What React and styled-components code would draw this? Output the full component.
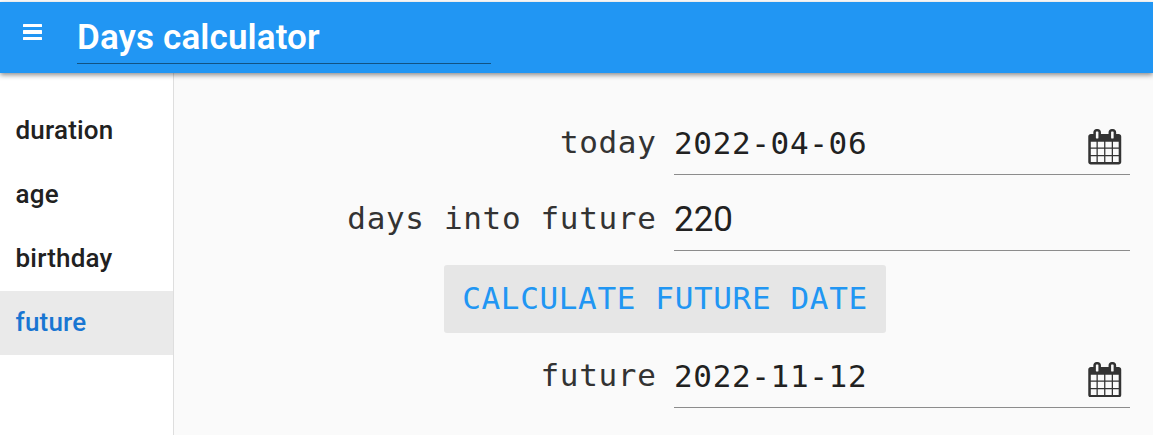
import React from "react";
import styled, { createGlobalStyle } from "styled-components";

const GlobalStyle = createGlobalStyle`
  *, *::before, *::after { box-sizing: border-box; }
  body { margin: 0; background: #fff; font-family: Roboto, sans-serif; overflow: hidden; }
`;

const Page = styled.div`
  display: flex;
  flex-direction: column;
  height: 435px;
  padding-top: 2px;
`;

const AppBar = styled.header`
  position: relative;
  z-index: 1;
  flex: none;
  display: flex;
  align-items: flex-start;
  height: 71px;
  padding-left: 23px;
  background: #2196f3;
  box-shadow: 0 2px 5px rgba(0, 0, 0, 0.45);
`;

const MenuButton = styled.button`
  display: flex;
  flex-direction: column;
  gap: 3px;
  width: 19px;
  margin: 22px 35px 0 0;
  padding: 0;
  border: 0;
  background: none;
`;

const MenuBar = styled.span`
  height: 3.4px;
  border-radius: 0.5px;
  background: #fff;
`;

const Title = styled.div`
  width: 414px;
  height: 62px;
  border-bottom: 1px solid #115384;
  color: #fff;
  font-size: 35px;
  font-weight: 600;
  letter-spacing: 0.12px;
  line-height: 72px;
  white-space: nowrap;
`;

const Body = styled.div`
  flex: 1;
  display: flex;
  min-height: 0;
`;

const Sidebar = styled.nav`
  flex: none;
  width: 174px;
  padding-top: 26px;
  border-right: 1px solid #dedede;
  background: #fff;
`;

const NavItem = styled.div`
  height: 64px;
  padding-left: 15.5px;
  background: ${(p) => (p.$active ? "#eaeaea" : "transparent")};
  color: ${(p) => (p.$active ? "#1976d2" : "#212121")};
  font-size: 26px;
  font-weight: 500;
  line-height: 62px;
  letter-spacing: 0.2px;
`;

const Content = styled.main`
  flex: 1;
  padding: 32px 23px 0 0;
  background: #fafafa;
`;

const Row = styled.div`
  display: flex;
  justify-content: flex-end;
  height: ${(p) => p.$height}px;
`;

const Label = styled.label`
  padding-right: 17.5px;
  color: #333;
  font-family: "DejaVu Sans Mono", monospace;
  font-size: 31px;
  letter-spacing: 0.66px;
  line-height: ${(p) => p.$line}px;
  white-space: pre;
`;

const Field = styled.div`
  display: flex;
  align-items: center;
  justify-content: space-between;
  width: 456px;
  height: 100%;
  padding: 0 8px ${(p) => p.$lift || 0}px 0;
  border-bottom: 1px solid #8c8c8c;
  color: #212121;
`;

const Value = styled.span`
  font-family: ${(p) => (p.$plain ? "Roboto, sans-serif" : '"DejaVu Sans Mono", monospace')};
  font-size: ${(p) => (p.$plain ? 35 : 31)}px;
  letter-spacing: ${(p) => (p.$plain ? 0 : 0.66)}px;
  line-height: 40px;
  padding-top: ${(p) => (p.$plain ? 14 : 11)}px;
`;

const CalendarSvg = styled.svg`
  width: 35.5px;
  height: 35.5px;
  margin-top: 19px;
  fill: #333;
`;

const ButtonRow = styled.div`
  display: flex;
  height: 68px;
  margin: 14px 0 0 270px;
`;

const ActionButton = styled.button`
  width: 442px;
  padding: 0 0 3px;
  border: 0;
  border-radius: 3px;
  background: #e6e6e6;
  color: #2196f3;
  font-family: "DejaVu Sans Mono", monospace;
  font-size: 31px;
  letter-spacing: 0.65px;
  white-space: nowrap;
`;

const Calendar = () => (
  <CalendarSvg viewBox="0 0 1792 1792" aria-hidden="true">
    <path d="M192 1664h288v-288h-288v288zM544 1664h320v-288h-320v288zM192 1312h288v-320h-288v320zM544 1312h320v-320h-320v320zM192 928h288v-288h-288v288zM928 1664h320v-288h-320v288zM544 928h320v-288h-320v288zM1312 1664h288v-288h-288v288zM928 1312h320v-320h-320v320zM576 448v-288q0-13-9.5-22.5t-22.5-9.5h-64q-13 0-22.5 9.5t-9.5 22.5v288q0 13 9.5 22.5t22.5 9.5h64q13 0 22.5-9.5t9.5-22.5zM1312 1312h288v-320h-288v320zM928 928h320v-288h-320v288zM1312 928h288v-288h-288v288zM1344 448v-288q0-13-9.5-22.5t-22.5-9.5h-64q-13 0-22.5 9.5t-9.5 22.5v288q0 13 9.5 22.5t22.5 9.5h64q13 0 22.5-9.5t9.5-22.5zM1728 384v1280q0 52-38 90t-90 38h-1408q-52 0-90-38t-38-90v-1280q0-52 38-90t90-38h128v-96q0-66 47-113t113-47h64q66 0 113 47t47 113v96h384v-96q0-66 47-113t113-47h64q66 0 113 47t47 113v96h128q52 0 90 38t38 90z" />
  </CalendarSvg>
);

const items = ["duration", "age", "birthday", "future"];

export default function App() {
  return (
    <>
      <GlobalStyle />
      <Page>
        <AppBar>
          <MenuButton aria-label="Menu">
            <MenuBar />
            <MenuBar />
            <MenuBar />
          </MenuButton>
          <Title>Days calculator</Title>
        </AppBar>
        <Body>
          <Sidebar>
            {items.map((item) => (
              <NavItem key={item} $active={item === "future"}>{item}</NavItem>
            ))}
          </Sidebar>
          <Content>
            <Row $height={70}>
              <Label $line={75}>today</Label>
              <Field $lift={4}>
                <Value>2022-04-06</Value>
                <Calendar />
              </Field>
            </Row>
            <Row $height={76}>
              <Label $line={87}>days into future</Label>
              <Field>
                <Value $plain>220</Value>
              </Field>
            </Row>
            <ButtonRow>
              <ActionButton>CALCULATE FUTURE DATE</ActionButton>
            </ButtonRow>
            <Row $height={75}>
              <Label $line={85}>future</Label>
              <Field>
                <Value>2022-11-12</Value>
                <Calendar />
              </Field>
            </Row>
          </Content>
        </Body>
      </Page>
    </>
  );
}
